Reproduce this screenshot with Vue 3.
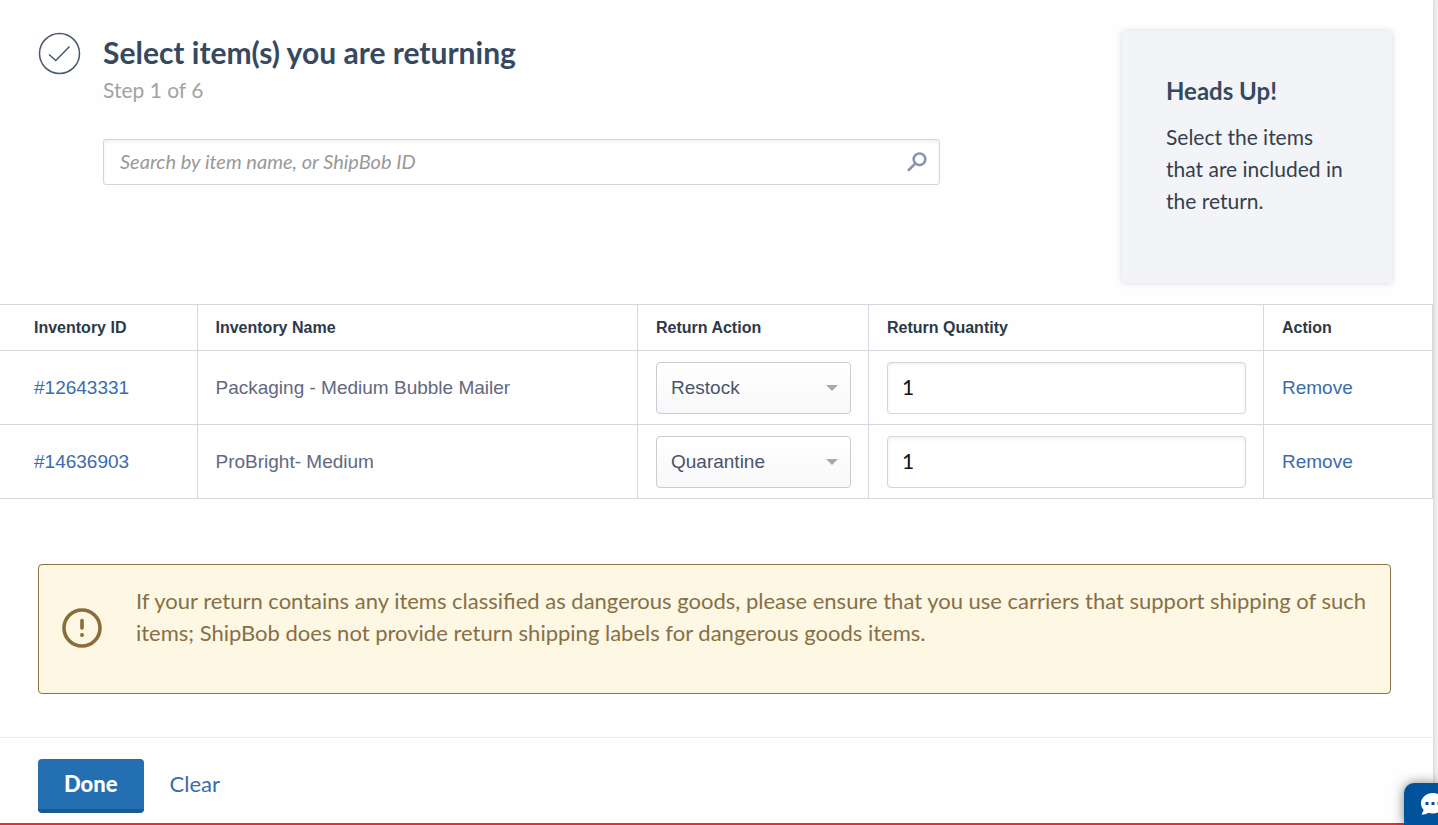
<script setup>
import { ref } from 'vue'

const search = ref('')
const items = ref([
    { id: 12643331, name: 'Packaging - Medium Bubble Mailer', action: 'Restock', quantity: '1' },
    { id: 14636903, name: 'ProBright- Medium', action: 'Quarantine', quantity: '1' },
])

const ACTIONS = ['Restock', 'Quarantine', 'Dispose']

const removeItem = id => {
    items.value = items.value.filter(item => item.id !== id)
}

const clearItems = () => {
    items.value = []
    search.value = ''
}
</script>

<template>
    <main class="page">
        <header class="intro">
            <svg class="step-icon" viewBox="0 0 42 42" fill="none" aria-hidden="true">
                <circle cx="21.5" cy="21.5" r="20" />
                <path d="M11 22.5l6.8 6L31.500 14.500" />
            </svg>

            <div class="step">
                <h1 class="step-title">Select item(s) you are returning</h1>
                <p class="step-count">Step 1 of 6</p>
                <label class="search">
                    <input v-model="search" class="search-input" type="text" aria-label="Search items"
                        placeholder="Search by item name, or ShipBob ID" />
                    <svg class="search-icon" viewBox="0 0 20 20" fill="none" aria-hidden="true">
                        <circle cx="12.5" cy="7.3" r="5.8" />
                        <path d="M8.2 11.6L1.8 18" />
                    </svg>
                </label>
            </div>

            <aside class="tip">
                <h2 class="tip-title">Heads Up!</h2>
                <p class="tip-text">Select the items that are included in the return.</p>
            </aside>
        </header>

        <table class="items">
            <colgroup>
                <col class="col-id" />
                <col />
                <col class="col-return" />
                <col class="col-quantity" />
                <col class="col-action" />
            </colgroup>
            <thead>
                <tr>
                    <th>Inventory ID</th>
                    <th>Inventory Name</th>
                    <th>Return Action</th>
                    <th>Return Quantity</th>
                    <th>Action</th>
                </tr>
            </thead>
            <tbody>
                <tr v-for="item in items" :key="item.id">
                    <td><a class="link" href="#">#{{ item.id }}</a></td>
                    <td>{{ item.name }}</td>
                    <td>
                        <div class="select">
                            <select v-model="item.action" class="field select-field" aria-label="Return Action">
                                <option v-for="action in ACTIONS" :key="action">{{ action }}</option>
                            </select>
                            <svg class="select-arrow" viewBox="0 0 12 6" aria-hidden="true">
                                <path d="M0 0h12L6 6z" />
                            </svg>
                        </div>
                    </td>
                    <td>
                        <input v-model="item.quantity" class="field quantity-field" type="text"
                            aria-label="Return Quantity" />
                    </td>
                    <td><a class="link" href="#" @click.prevent="removeItem(item.id)">Remove</a></td>
                </tr>
            </tbody>
        </table>

        <section class="notice">
            <svg class="notice-icon" viewBox="0 0 40 40" fill="none" aria-hidden="true">
                <circle class="notice-ring" cx="20" cy="20" r="18" />
                <path class="notice-bar" d="M20 12.5v7.5" />
                <circle class="notice-dot" cx="20" cy="27" r="2" />
            </svg>
            <p class="notice-text">
                If your return contains any items classified as dangerous goods, please ensure that you use carriers
                that support shipping of such items; ShipBob does not provide return shipping labels for dangerous
                goods items.
            </p>
        </section>

        <footer class="actions">
            <button class="btn-done" type="button">Done</button>
            <button class="btn-clear" type="button" @click="clearItems">Clear</button>
        </footer>
    </main>

    <button class="chat" type="button" aria-label="Open chat">
        <svg class="chat-icon" viewBox="0 0 24 22" aria-hidden="true">
            <path
                d="M12 0C5.4 0 0 4.5 0 10.2c0 2.7 1 5 2.7 6.700L.5 21.500c3 .2 5.200-.6 6.800-1.800 1.500.5 3 .7 4.700.7 6.600 0 12-4.500 12-10.200S18.600 0 12 0z"
                fill="#fff" />
            <path d="M4.500 9h3v3h-3zM10.500 9h3v3h-3zM16.500 9h3v3h-3z" fill="#00529b" />
        </svg>
    </button>
</template>

<style>
body {
    margin: 0;
    background: #f0f0f0;
}
</style>

<style scoped>
.page {
    box-sizing: border-box;
    min-height: 100vh;
    margin-right: 5px;
    background: #fefefe;
    box-shadow: 0 0 4px rgba(0, 0, 0, 0.2);
    font-family: Lato, 'Liberation Sans', sans-serif;
    color: #333f4d;
}

.intro {
    display: flex;
    align-items: flex-start;
    padding: 31px 41px 21px 38px;
}

.step-icon {
    flex: none;
    width: 42px;
    height: 42px;
    margin-top: 1px;
    stroke: #4a5a6c;
    stroke-width: 1.5;
    overflow: visible;
}

.step {
    flex: 1;
    max-width: 837px;
    margin: 0 auto 0 23px;
}

.step-title {
    margin: 3px 0 0;
    font-size: 30px;
    line-height: 36px;
    font-weight: 700;
    color: #36495e;
}

.step-count {
    margin: 4px 0 33px;
    font-size: 21px;
    line-height: 32px;
    color: #a3a3a3;
}

.search {
    display: flex;
    align-items: center;
    box-sizing: border-box;
    height: 46px;
    padding-right: 12px;
    border: 1px solid #d3d6d9;
    border-radius: 3px;
    background: #fff;
    box-shadow: inset 0 2px 4px rgba(0, 0, 0, 0.06);
}

.search-input {
    flex: 1;
    min-width: 0;
    padding: 0 16px 2px;
    border: none;
    outline: none;
    background: none;
    font: italic 20px Lato, 'Liberation Sans', sans-serif;
    color: #333f4d;
}

.search-input::placeholder {
    color: #999;
    opacity: 1;
}

.search-icon {
    width: 20px;
    height: 20px;
    stroke: #8596b2;
    stroke-width: 2.6;
    stroke-linecap: round;
}

.tip {
    flex: none;
    box-sizing: border-box;
    width: 270px;
    height: 252px;
    margin-left: 40px;
    padding: 44px 40px 44px 44px;
    border-radius: 4px;
    background: #f3f4f8;
    box-shadow: 0 0 6px rgba(0, 0, 0, 0.16);
}

.tip-title {
    margin: 0 0 14px;
    font-size: 24px;
    line-height: 32px;
    font-weight: 700;
    color: #36495e;
}

.tip-text {
    margin: 0;
    font-size: 21px;
    line-height: 32px;
}

.items {
    width: 100%;
    border-collapse: collapse;
    table-layout: fixed;
    font-family: 'Liberation Sans', sans-serif;
    font-size: 19px;
    color: #626880;
}

.col-id {
    width: 197px;
}

.col-return {
    width: 231px;
}

.col-quantity {
    width: 395px;
}

.col-action {
    width: 169px;
}

.items th,
.items td {
    box-sizing: border-box;
    padding: 0 17px 0 18px;
    border: 1px solid #d5d8de;
    text-align: left;
}

.items th {
    height: 46px;
    font-size: 16px;
    color: #2d3947;
}

.items td {
    height: 74px;
}

.items th:first-child,
.items td:first-child {
    padding-left: 34px;
    border-left: none;
}

.link {
    color: #3b6cab;
    text-decoration: none;
}

.select {
    position: relative;
}

.field {
    display: block;
    box-sizing: border-box;
    width: 100%;
    height: 52px;
    margin: 0;
    padding: 0 14px;
    border: 1px solid #d3d6d9;
    border-radius: 4px;
    background: #fff;
}

.select-field {
    appearance: none;
    border-color: #c8ccd3;
    background: linear-gradient(#fff, #f8f8fa);
    font: 19px 'Liberation Sans', sans-serif;
    color: #4a5568;
}

.select-arrow {
    position: absolute;
    top: 23px;
    right: 13px;
    width: 12px;
    height: 6px;
    fill: #a9a9a9;
    pointer-events: none;
}

.quantity-field {
    padding-bottom: 2px;
    box-shadow: inset 0 2px 4px rgba(0, 0, 0, 0.06);
    font: 21px Lato, 'Liberation Sans', sans-serif;
    color: #111;
}

.notice {
    display: flex;
    align-items: center;
    box-sizing: border-box;
    min-height: 130px;
    margin: 65px 42px 43px 38px;
    padding: 20px 22px 22px 23px;
    border: 1px solid #8a7448;
    border-radius: 4px;
    background: #fdf7e3;
}

.notice-icon {
    flex: none;
    width: 40px;
    height: 40px;
}

.notice-ring {
    stroke: #8a6d3b;
    stroke-width: 3.6;
}

.notice-bar {
    stroke: #8a6d3b;
    stroke-width: 3.6;
    stroke-linecap: round;
}

.notice-dot {
    fill: #8a6d3b;
}

.notice-text {
    align-self: flex-start;
    margin: 0 0 0 34px;
    font-size: 22px;
    line-height: 32px;
    color: #857049;
}

.actions {
    display: flex;
    align-items: center;
    gap: 26px;
    padding: 21px 38px 10px;
    border-top: 1px solid #ebecee;
    border-bottom: 2px solid #e03030;
}

.btn-done {
    height: 54px;
    padding: 0 26px 2px;
    border: none;
    border-bottom: 4px solid #1a5a94;
    border-radius: 4px;
    background: #236fb1;
    font: 900 22px Lato, 'Liberation Sans', sans-serif;
    color: #fff;
    cursor: pointer;
}

.btn-clear {
    padding: 0 0 6px;
    border: none;
    background: none;
    font: 22px Lato, 'Liberation Sans', sans-serif;
    color: #3b6cab;
    cursor: pointer;
}

.chat {
    position: fixed;
    right: 0;
    bottom: 0;
    width: 34px;
    height: 42px;
    padding: 0 0 0 17px;
    border: none;
    border-radius: 10px 0 0 0;
    background: #00529b;
    box-shadow: 0 0 12px rgba(0, 0, 0, 0.5);
    overflow: hidden;
    cursor: pointer;
}

.chat-icon {
    display: block;
    width: 24px;
    height: 22px;
}
</style>
